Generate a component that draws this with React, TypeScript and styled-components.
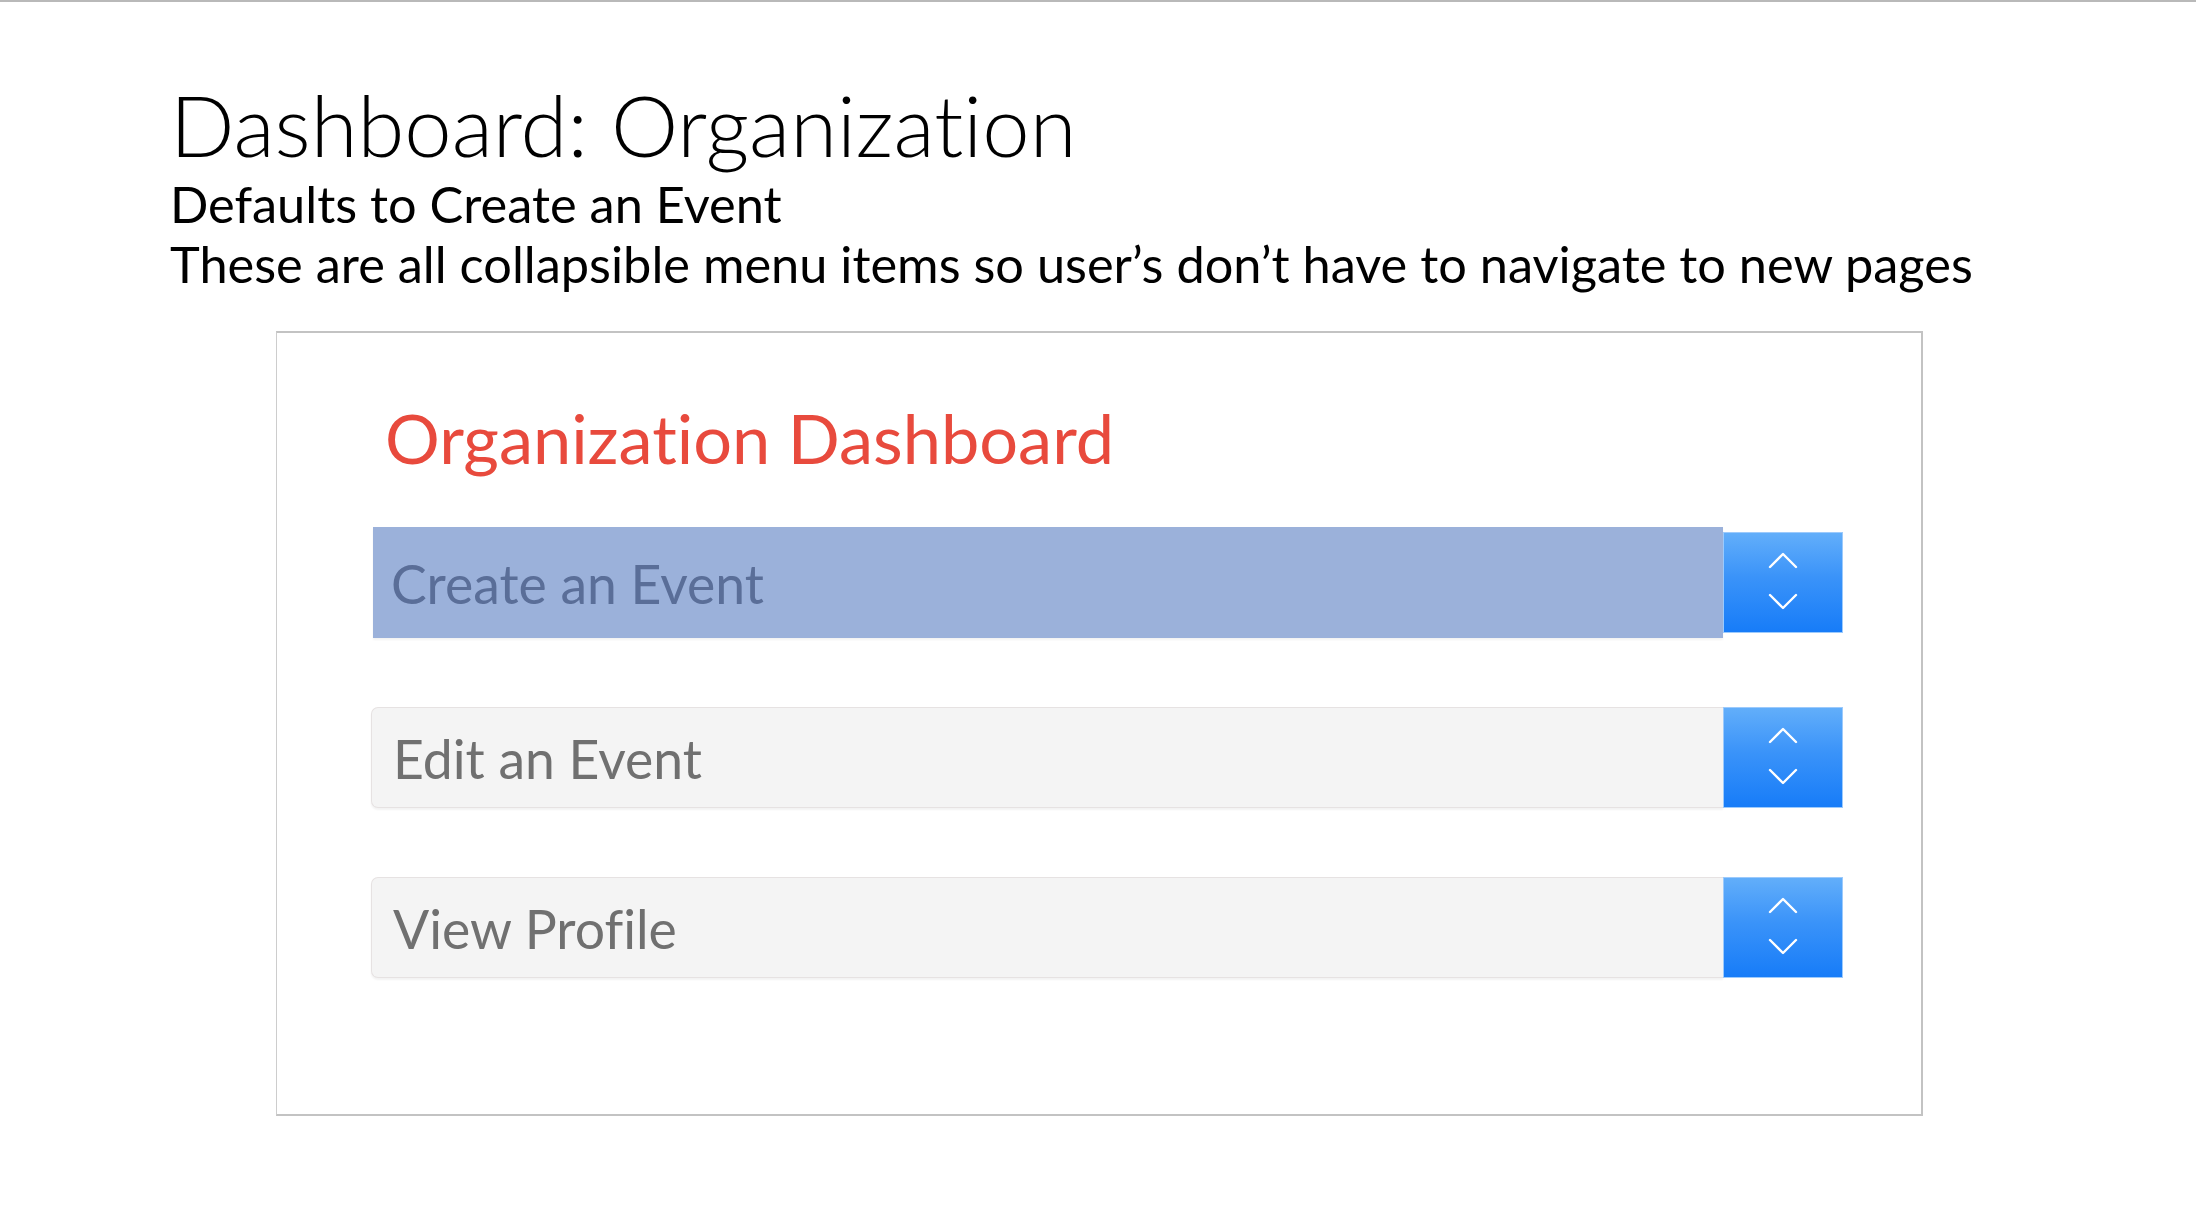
import React from "react";
import styled, { createGlobalStyle } from "styled-components";

const GlobalStyle = createGlobalStyle`
  html, body { margin: 0; padding: 0; background: #ffffff; }
  body {
    font-family: Lato, "Open Sans", sans-serif;
    font-variant-ligatures: none;
    font-feature-settings: "liga" 0, "dlig" 0;
  }
`;

const Slide = styled.main`
  box-sizing: border-box;
  width: 2196px;
  height: 1232px;
  border-top: 2px solid #b9b9b9;
  padding: 74px 0 0 170px;
  background: #ffffff;
  color: #000000;
  font-family: Lato, "Open Sans", sans-serif;
`;

const Title = styled.h1`
  margin: 0;
  font-size: 85px;
  line-height: 96px;
  font-weight: 300;
`;

const Subtitle = styled.p`
  margin: 0;
  font-size: 50.5px;
  line-height: 60px;
  font-weight: 400;
  &:first-of-type { margin-top: 2px; }
`;

const Card = styled.section`
  box-sizing: border-box;
  width: 1647px;
  height: 785px;
  margin: 37px 0 0 106px;
  border: 2px solid #c3c3c3;
  border-left: 1px solid #cdcdcd;
  padding: 64px 0 0 94px;
  background: #ffffff;
`;

const CardTitle = styled.h2`
  margin: 0 0 0 14px;
  font-size: 68.5px;
  line-height: 82px;
  font-weight: 400;
  color: #e84a3d;
`;

const MenuList = styled.div`
  display: flex;
  flex-direction: column;
  gap: 69px;
  width: 1472px;
  margin-top: 48px;
`;

const MenuRow = styled.div`
  display: flex;
  align-items: center;
`;

const MenuLabel = styled.div<{ $active?: boolean }>`
  flex: 1;
  box-sizing: border-box;
  display: flex;
  align-items: center;
  height: ${(p) => (p.$active ? "111px" : "101px")};
  margin-left: ${(p) => (p.$active ? "2px" : "0")};
  padding-left: ${(p) => (p.$active ? "18px" : "21px")};
  font-size: 53.5px;
  color: ${(p) => (p.$active ? "#5a6e98" : "#707070")};
  background: ${(p) => (p.$active ? "#9bb1da" : "#f4f4f4")};
  border: ${(p) => (p.$active ? "none" : "1px solid #e6e2e2")};
  border-right: none;
  border-radius: ${(p) => (p.$active ? "0" : "7px 0 0 7px")};
  box-shadow: 0 2px 2px rgba(0, 0, 0, 0.05);
`;

const ToggleButton = styled.button`
  box-sizing: border-box;
  width: 120px;
  height: 101px;
  display: flex;
  align-items: center;
  justify-content: center;
  padding: 0;
  border: 1px solid #9ccafc;
  background: linear-gradient(180deg, #62aefa 0%, #3a93f9 45%, #177cf8 100%);
  cursor: pointer;
`;

const Chevrons = () => (
  <svg width="32" height="62" viewBox="0 0 32 62" fill="none">
    <path d="M3 15 L16 2 L29 15" stroke="#ffffff" strokeWidth="2.4" strokeLinecap="round" strokeLinejoin="round" />
    <path d="M3 43 L16 56 L29 43" stroke="#ffffff" strokeWidth="2.4" strokeLinecap="round" strokeLinejoin="round" />
  </svg>
);

const items = [
  { label: "Create an Event", active: true },
  { label: "Edit an Event", active: false },
  { label: "View Profile", active: false },
];

export default function App() {
  return (
    <>
      <GlobalStyle />
      <Slide>
        <Title>Dashboard: Organization</Title>
        <Subtitle>Defaults to Create an Event</Subtitle>
        <Subtitle>These are all collapsible menu items so user’s don’t have to navigate to new pages</Subtitle>
        <Card>
          <CardTitle>Organization Dashboard</CardTitle>
          <MenuList>
            {items.map((it) => (
              <MenuRow key={it.label}>
                <MenuLabel $active={it.active}>{it.label}</MenuLabel>
                <ToggleButton aria-label={`Toggle ${it.label}`}>
                  <Chevrons />
                </ToggleButton>
              </MenuRow>
            ))}
          </MenuList>
        </Card>
      </Slide>
    </>
  );
}
